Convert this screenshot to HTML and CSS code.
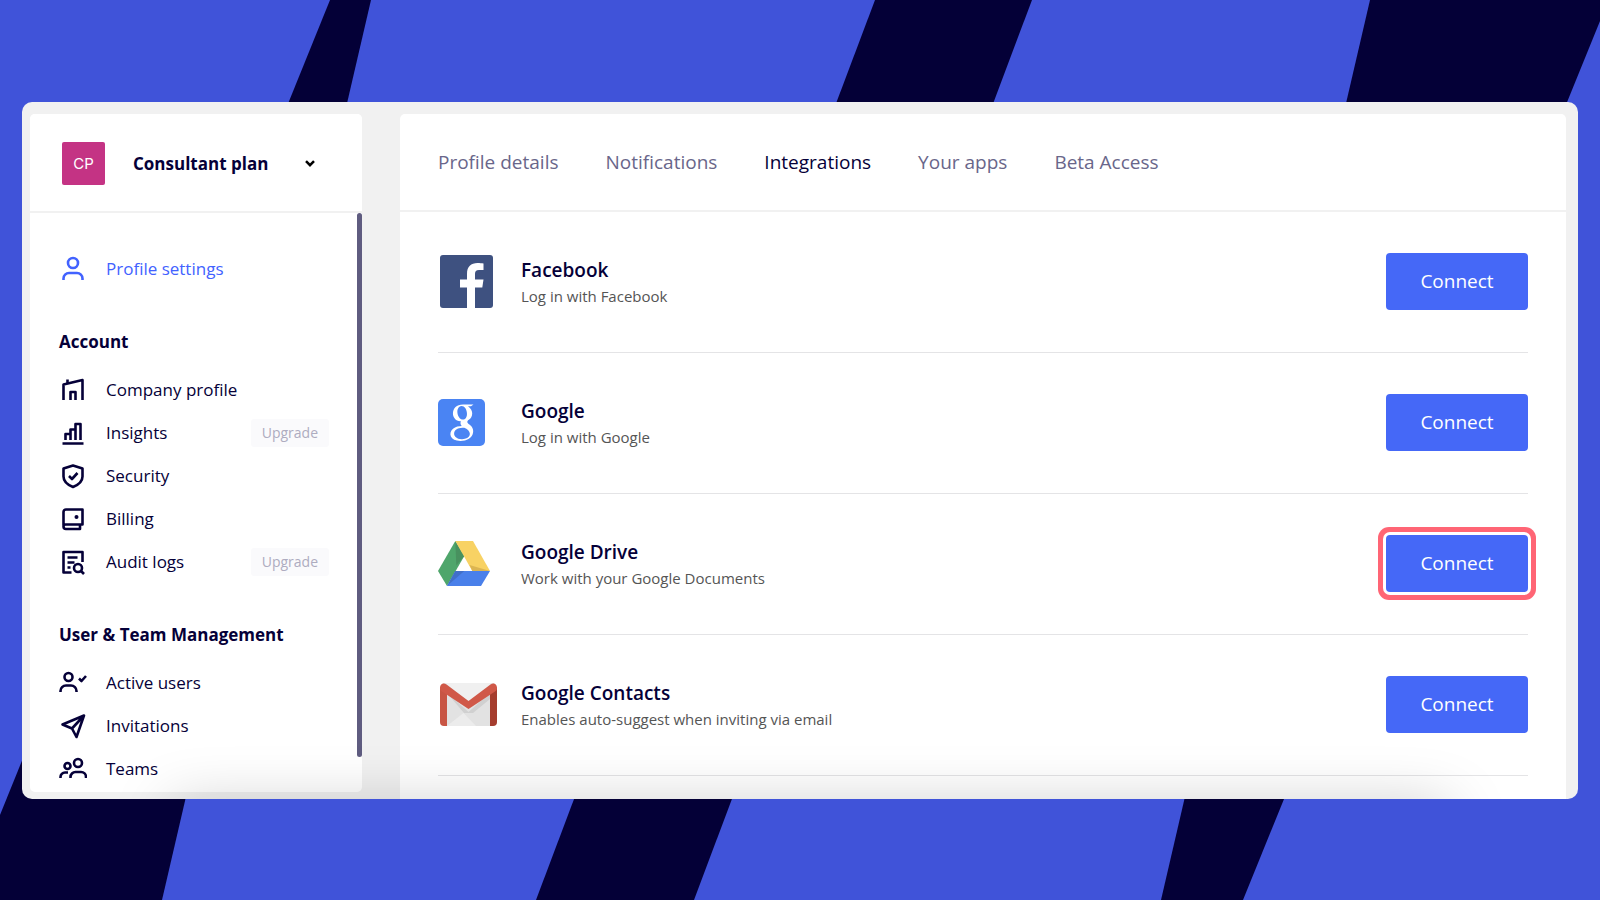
FILE: index.html
```html
<!DOCTYPE html>
<html lang="en">
<head>
    <meta charset="UTF-8">
    <meta name="viewport" content="width=device-width, initial-scale=1">
    <title>Integrations</title>
    <link rel="stylesheet" href="styles.css">
</head>
<body>

    <!-- Background stripes -->
    <svg class="backdrop" viewBox="0 0 1600 900" preserveAspectRatio="none" aria-hidden="true">
        <polygon points="330,0 371,0 162,900 0,900 0,815"/>
        <polygon points="875,0 1032,0 694,900 536,900"/>
        <polygon points="1370,0 1600,0 1600,21 1243,900 1161,900"/>
    </svg>

    <div class="window">

        <!-- Sidebar -->
        <aside class="sidebar">
            <button class="plan" type="button">
                <span class="plan-avatar">CP</span>
                <span class="plan-name">Consultant plan</span>
                <svg class="plan-arrow" viewBox="0 0 10 7"><path d="M1 1.2l4 4 4-4"/></svg>
            </button>

            <nav class="side-nav">
                <a class="nav-item active" href="#">
                    <svg class="nav-icon" viewBox="0 0 28 28">
                        <circle cx="14" cy="8" r="5"/>
                        <path d="M4.500 25v-1.500a5.500 5.500 0 0 1 5.500-5.500h8a5.500 5.500 0 0 1 5.500 5.500v1.500"/>
                    </svg>
                    Profile settings
                </a>

                <h2 class="nav-title">Account</h2>
                <a class="nav-item" href="#">
                    <svg class="nav-icon" viewBox="0 0 28 28">
                        <path d="M4.500 24V8.500L23.500 4v20"/>
                        <path d="M8.500 7.500V3.500M11.500 24v-8h5v8"/>
                    </svg>
                    Company profile
                </a>
                <a class="nav-item" href="#">
                    <svg class="nav-icon" viewBox="0 0 28 28">
                        <path d="M3.500 24.500h21M6.500 21v-6h5v6M11.500 21V10.500h5V21M16.500 21V5h5v16"/>
                    </svg>
                    Insights
                    <span class="badge">Upgrade</span>
                </a>
                <a class="nav-item" href="#">
                    <svg class="nav-icon" viewBox="0 0 28 28">
                        <path d="M14 3.500l9.500 3v8c0 5-4.500 8.500-9.500 10.500-5-2-9.500-5.500-9.500-10.500v-8z"/>
                        <path d="M10 14l3 3 5.500-6"/>
                    </svg>
                    Security
                </a>
                <a class="nav-item" href="#">
                    <svg class="nav-icon" viewBox="0 0 28 28">
                        <path d="M4.500 20.500V7a2.500 2.500 0 0 1 2.500-2.500h16.500v15H6.500a2 2 0 0 0-2 2v0a2.500 2.500 0 0 0 2.500 2.500h14v-4.500"/>
                        <circle class="solid" cx="17.500" cy="12" r="2"/>
                    </svg>
                    Billing
                </a>
                <a class="nav-item" href="#">
                    <svg class="nav-icon" viewBox="0 0 28 28">
                        <path d="M12.500 24.500H4.500V4h19v10M8.500 9.500h10M8.500 14.500h7M8.500 19.500h3"/>
                        <circle cx="19" cy="20" r="4"/>
                        <path d="M22 23l3 3"/>
                    </svg>
                    Audit logs
                    <span class="badge">Upgrade</span>
                </a>

                <h2 class="nav-title">User &amp; Team Management</h2>
                <a class="nav-item" href="#">
                    <svg class="nav-icon" viewBox="0 0 28 28">
                        <circle cx="9.500" cy="8" r="4"/>
                        <path d="M1.500 23v-1a5.500 5.500 0 0 1 5.500-5.500h5a5.500 5.500 0 0 1 5.500 5.500v1M20 9.500l2.500 2.500 4.500-5"/>
                    </svg>
                    Active users
                </a>
                <a class="nav-item" href="#">
                    <svg class="nav-icon" viewBox="0 0 28 28">
                        <path d="M3.500 12.500L25 3.500 17.500 25l-4.500-8.500zM13 16.500L25 3.500"/>
                    </svg>
                    Invitations
                </a>
                <a class="nav-item" href="#">
                    <svg class="nav-icon" viewBox="0 0 28 28">
                        <circle cx="19" cy="8" r="4"/>
                        <circle cx="8.500" cy="11" r="3"/>
                        <path d="M11.500 23v-1a5 5 0 0 1 5-5h5.500a5 5 0 0 1 5 5v1M1.500 23v-1a4.500 4.500 0 0 1 4.500-4.500h3"/>
                    </svg>
                    Teams
                </a>
            </nav>
        </aside>

        <!-- Main panel -->
        <main class="panel">
            <nav class="tabs">
                <a class="tab" href="#">Profile details</a>
                <a class="tab" href="#">Notifications</a>
                <a class="tab active" href="#">Integrations</a>
                <a class="tab" href="#">Your apps</a>
                <a class="tab" href="#">Beta Access</a>
            </nav>

            <ul class="apps">
                <li class="app">
                    <div class="app-logo">
                        <svg width="57" height="53" viewBox="0 0 57 53">
                            <rect x="2" width="53" height="53" rx="3" fill="#3e5180"/>
                            <path fill="#fff" d="M29 53V32.500h-7V24.500h7v-5.500c0-7.500 4-11 10.500-11 2 0 4.500.2 6 .5v6.500h-4.500c-3 0-4 1.500-4 4v5.500h8.500l-1.200 8H37V53z"/>
                        </svg>
                    </div>
                    <div class="app-text">
                        <h3 class="app-name">Facebook</h3>
                        <p class="app-info">Log in with Facebook</p>
                    </div>
                    <button class="connect" type="button">Connect</button>
                </li>
                <li class="app">
                    <div class="app-logo">
                        <svg width="47" height="47" viewBox="0 0 47 47">
                            <rect width="47" height="47" rx="5" fill="#4a84f3"/>
                            <path fill="#fff" fill-rule="evenodd" d="M25 5.500h10.500l-2.500 1.700h-3c6 4.300 5 10.800.8 13.600-2.300 1.600-1.700 3.200.6 4.700 7 4.500 4.600 16.500-8.900 16.500-10.500 0-12.500-8-7.500-12.200 2.500-2.100 6-2.600 8.800-2.700-1.300-1.600-1.700-3.200-.9-4.900-10.400.4-11.400-16.700 2.100-16.700zM23.500 7c-6.700.6-4.500 13.600 1.500 13.600C31.500 20.300 29.500 6.800 23.500 7zM24.800 28.700c-11.300-.2-11.300 11.200-1.100 11.500 9 .2 10.600-6.700 4.700-10.400-.9-.7-1.600-1.100-3.600-1.100z"/>
                        </svg>
                    </div>
                    <div class="app-text">
                        <h3 class="app-name">Google</h3>
                        <p class="app-info">Log in with Google</p>
                    </div>
                    <button class="connect" type="button">Connect</button>
                </li>
                <li class="app">
                    <div class="app-logo">
                        <svg width="52" height="45" viewBox="0 0 52 45">
                            <path fill="#4fa66b" d="M17.300 0L0 30l9 15 17.300-30z"/>
                            <path fill="#48915f" d="M17.300 0l1 24.500 8-9.500z"/>
                            <path fill="#f8d264" d="M17.300 0H35l17 30H34.300z"/>
                            <path fill="#dcb552" d="M31.500 24L52 30H34.300z"/>
                            <path fill="#4a80ea" d="M17.300 30H52l-9 15H9z"/>
                            <path fill="#416fc9" d="M17.300 30h9L9 45z"/>
                        </svg>
                    </div>
                    <div class="app-text">
                        <h3 class="app-name">Google Drive</h3>
                        <p class="app-info">Work with your Google Documents</p>
                    </div>
                    <button class="connect highlight" type="button">Connect</button>
                </li>
                <li class="app">
                    <div class="app-logo">
                        <svg width="60" height="43" viewBox="0 0 60 43">
                            <path fill="#e2e2e2" d="M5 0h51v43H5z"/>
                            <path fill="#f0f0f0" d="M7 0h47L30.500 19z"/>
                            <path fill="#d0d0d0" d="M9 10l21.500 19L52 10v6L35 30 26 30z"/>
                            <path fill="#ececec" d="M9 43l16.500-13L38 43z"/>
                            <path fill="#c85544" d="M2 4l7 5v34H6a4 4 0 0 1-4-4z"/>
                            <path fill="#a53d2e" d="M59 4l-7 5v34h3a4 4 0 0 0 4-4z"/>
                            <path fill="#d05848" d="M2 5C2 .5 5.500-.8 8.500 1.500l22 16.500 22-16.500C55.500-.8 59 .5 59 5c0 1.500-.5 2.500-2 3.500L30.500 26 4 8.500C2.500 7.500 2 6.500 2 5z"/>
                        </svg>
                    </div>
                    <div class="app-text">
                        <h3 class="app-name">Google Contacts</h3>
                        <p class="app-info">Enables auto-suggest when inviting via email</p>
                    </div>
                    <button class="connect" type="button">Connect</button>
                </li>
            </ul>
        </main>
    </div>

</body>
</html>
```
FILE: styles.css
```css
* {
    box-sizing: border-box;
}
body {
    display: flex;
    height: 100vh;
    margin: 0;
    padding: 102px 22px 101px;
    background-color: #4053d9;
    color: #050038;
    font-family: "Open Sans", "Noto Sans", sans-serif;
    overflow: hidden;
}
h2, h3, p, ul {
    margin: 0;
    padding: 0;
}
a {
    color: inherit;
    text-decoration: none;
}
button {
    border: none;
    font-family: inherit;
    cursor: pointer;
}
.backdrop {
    position: fixed;
    inset: 0;
    z-index: -1;
    width: 100%;
    height: 100%;
    fill: #040037;
}
.window {
    position: relative;
    display: flex;
    flex: 1;
    gap: 38px;
    padding: 12px 12px 0 8px;
    background-color: #f1f1f1;
    border-radius: 10px;
    overflow: hidden;
}
/* soft shade along the bottom edge */
.window::after {
    content: "";
    position: absolute;
    top: 100%;
    left: 150px;
    right: 130px;
    height: 40px;
    box-shadow: 0 10px 60px rgba(0, 0, 0, 0.25);
    pointer-events: none;
}

/* Sidebar */
.sidebar {
    display: flex;
    flex-direction: column;
    flex: 0 0 332px;
    margin-bottom: 7px;
    background-color: #fff;
    border-radius: 5px;
    overflow: hidden;
}
.plan {
    display: flex;
    align-items: center;
    gap: 28px;
    flex: 0 0 99px;
    padding: 2px 47px 0 32px;
    background-color: #fff;
    border-bottom: 2px solid #f1f1f1;
    color: #050038;
}
.plan-avatar {
    width: 43px;
    border-radius: 2px;
    background-color: #c43384;
    color: #fff;
    font-family: Inter, sans-serif;
    font-size: 15px;
    line-height: 43px;
}
.plan-name {
    font-size: 17px;
    font-weight: 700;
}
.plan-arrow {
    width: 10px;
    margin-left: auto;
    fill: none;
    stroke: #000;
    stroke-width: 2.5;
}
.side-nav {
    position: relative;
    flex: 1;
    min-height: 0;
    padding: 34px 33px 0 29px;
}
.side-nav::after {
    content: "";
    position: absolute;
    top: 0;
    right: 0;
    width: 5px;
    height: 94%;
    border-radius: 3px;
    background-color: #5f5c80;
}
.nav-item {
    display: flex;
    align-items: center;
    gap: 19px;
    height: 43px;
    font-size: 17px;
}
.nav-item.active {
    color: #4262ff;
}
.nav-icon {
    width: 28px;
    height: 28px;
    fill: none;
    stroke: currentColor;
    stroke-width: 2.6;
    stroke-linejoin: round;
}
.nav-icon .solid {
    fill: currentColor;
    stroke: none;
}
.nav-title {
    margin: 40px 0 14px;
    font-size: 17px;
    font-weight: 700;
    line-height: 24px;
}
.badge {
    margin-left: auto;
    padding: 0 11px;
    border-radius: 3px;
    background-color: #fafafc;
    color: #aeacc0;
    font-size: 14px;
    line-height: 28px;
}

/* Main panel */
.panel {
    flex: 1;
    min-width: 0;
    background-color: #fff;
    border-radius: 5px 5px 0 0;
    overflow: hidden;
}
.tabs {
    display: flex;
    align-items: center;
    gap: 47px;
    height: 98px;
    padding: 0 38px;
    border-bottom: 2px solid #f1f1f1;
    color: #69668a;
    font-size: 19px;
}
.tab.active {
    color: #050038;
}
.apps {
    padding: 0 38px;
    list-style: none;
}
.app {
    display: flex;
    align-items: center;
    height: 141px;
    padding-bottom: 2px;
    border-bottom: 1px solid #e4e4e6;
}
.app-logo {
    display: flex;
    flex: 0 0 83px;
}
.app-text {
    flex: 1;
    padding-top: 4px;
}
.app-name {
    font-size: 19px;
    font-weight: 600;
    line-height: 26px;
}
.app-info {
    color: #555;
    font-size: 15px;
    line-height: 26px;
}
.connect {
    width: 142px;
    height: 57px;
    border-radius: 4px;
    background-color: #4568f7;
    color: #fff;
    font-size: 19px;
}
.connect.highlight {
    box-shadow: 0 0 0 3px #fff, 0 0 0 8px #ff6575;
}
```
